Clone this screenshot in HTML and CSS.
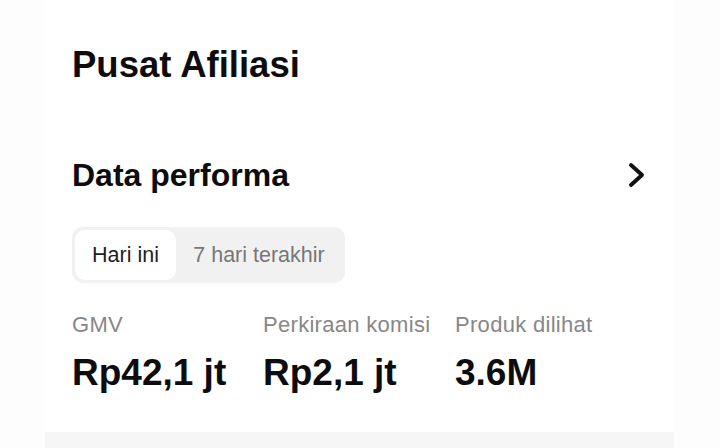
FILE: index.html
```html
<!DOCTYPE html>
<html lang="id">
<head>
<meta charset="utf-8">
<title>Pusat Afiliasi</title>
<link rel="stylesheet" href="styles.css">
</head>
<body>
<div class="screen">
  <main class="card">
    <h1 class="title">Pusat Afiliasi</h1>
    <div class="section-head">
      <h2 class="section-title">Data performa</h2>
      <svg class="chevron" width="20" height="28" viewBox="0 0 20 28" aria-hidden="true">
        <path d="M5 4 L16 14 L5 24" fill="none" stroke="#111" stroke-width="3.9" stroke-linecap="round" stroke-linejoin="round"/>
      </svg>
    </div>
    <div class="segmented">
      <div class="seg seg-active">Hari ini</div>
      <div class="seg">7 hari terakhir</div>
    </div>
    <div class="metrics">
      <div class="metric">
        <div class="metric-label">GMV</div>
        <div class="metric-value">Rp42,1 jt</div>
      </div>
      <div class="metric">
        <div class="metric-label">Perkiraan komisi</div>
        <div class="metric-value">Rp2,1 jt</div>
      </div>
      <div class="metric">
        <div class="metric-label">Produk dilihat</div>
        <div class="metric-value">3.6M</div>
      </div>
    </div>
  </main>
  <div class="bottom-bar"></div>
</div>
</body>
</html>
```

FILE: styles.css
```css
* { box-sizing: border-box; }

html, body {
  margin: 0;
  padding: 0;
}

body {
  font-family: "Liberation Sans", Arial, sans-serif;
  color: #111;
  background: #fdfdfd;
}

.screen {
  width: 720px;
  height: 448px;
  overflow: hidden;
  background: #fdfdfd;
}

.card {
  margin-left: 45px;
  width: 629px;
  height: 432px;
  background: #ffffff;
  padding: 45px 28px 0 27px;
}

.title {
  margin: 0;
  font-size: 36.5px;
  line-height: 40px;
  font-weight: 700;
  color: #0d0d0d;
}

.section-head {
  margin-top: 71.5px;
  height: 36px;
  display: flex;
  align-items: center;
  justify-content: space-between;
}

.section-title {
  margin: 0;
  font-size: 32px;
  line-height: 36px;
  font-weight: 700;
  color: #0d0d0d;
}

.chevron {
  display: block;
}

.segmented {
  margin-top: 34.5px;
  display: inline-flex;
  height: 56px;
  padding: 3px;
  background: #f1f1f1;
  border-radius: 11px;
}

.seg {
  display: flex;
  align-items: center;
  justify-content: center;
  height: 50px;
  font-size: 21.5px;
  color: #777;
}

.seg:first-child {
  width: 101px;
}

.seg:last-child {
  width: 166px;
}

.seg-active {
  background: #fff;
  color: #1f1f1f;
  border-radius: 10px;
}

.metrics {
  margin-top: 28.5px;
  display: grid;
  grid-template-columns: 191px 192px auto;
}

.metric-label {
  font-size: 22px;
  line-height: 26px;
  letter-spacing: 0.3px;
  color: #878787;
  white-space: nowrap;
}

.metric-value {
  margin-top: 15px;
  font-size: 37px;
  line-height: 40px;
  font-weight: 700;
  color: #0d0d0d;
  white-space: nowrap;
}

.bottom-bar {
  margin-left: 45px;
  width: 629px;
  height: 16px;
  background: #f6f6f6;
}
```
